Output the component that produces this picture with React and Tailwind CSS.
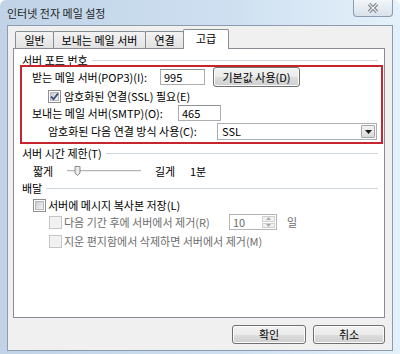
import React from "react";

const FONT = "font-['Noto_Sans_CJK_KR','Noto_Sans',sans-serif]";

function CheckBox({ checked, disabled }) {
  return (
    <span
      className={`w-[13px] h-[13px] shrink-0 border flex items-center justify-center ${
        disabled ? "border-[#c5c5c5] bg-[#f4f4f4]" : "border-[#8e8f8f] bg-white"
      }`}
    >
      <span
        className={`w-[9px] h-[9px] relative ${
          disabled
            ? "bg-[#f0f0f0]"
            : "bg-gradient-to-br from-[#c9cdd3] to-[#f4f4f4] border border-[#b4b8bd]"
        }`}
      >
        {checked && (
          <svg
            viewBox="0 0 11 11"
            className="absolute -left-[2px] -top-[2px] w-[11px] h-[11px]"
          >
            <path
              d="M2 5.5 L4.5 8.2 L9 2.5"
              fill="none"
              stroke="#364a7c"
              strokeWidth="1.8"
            />
          </svg>
        )}
      </span>
    </span>
  );
}

function GroupHeader({ label }) {
  return (
    <div className="flex items-center h-[12px] gap-[4px]">
      <span className="text-[11px] leading-none text-black whitespace-nowrap">
        {label}
      </span>
      <span className="flex-1 border-t border-[#cfd6dc]" />
    </div>
  );
}

function WinButton({ children, className }) {
  return (
    <div
      className={`flex items-center justify-center border border-[#707070] rounded-[3px] bg-[linear-gradient(#f2f2f2_0%,#ebebeb_50%,#dddddd_51%,#cfcfcf_100%)] shadow-[inset_0_0_0_1px_#fbfbfb] text-[11px] leading-none text-black ${className}`}
    >
      {children}
    </div>
  );
}

function TextBox({ value, className, disabled }) {
  return (
    <div
      className={`flex items-center px-[3px] bg-white border ${
        disabled
          ? "border-[#b8b8b8] text-[#8a8a8a]"
          : "border-[#abadb3] border-t-[#8e9297] text-black"
      } text-[11px] leading-none ${className}`}
    >
      {value}
    </div>
  );
}

export default function App() {
  return (
    <div
      className={`w-[400px] h-[354px] overflow-hidden flex flex-col bg-[linear-gradient(90deg,#c0d3e7_0%,#cddff0_55%,#e4f1fa_100%)] rounded-t-[6px] ${FONT}`}
    >
      {/* Title bar */}
      <div className="h-[25px] flex items-start justify-between pl-[7px] pr-[7px]">
        <span className="text-[11px] leading-none text-[#1e1e1e] mt-[8px]">
          인터넷 전자 메일 설정
        </span>
        <div className="w-[40px] h-[17px] border border-t-0 border-[#8d9cb0] rounded-b-[4px] bg-gradient-to-b from-[#f3f6fa] to-[#d8e1eb] flex items-center justify-center">
          <svg viewBox="0 0 12 10" className="w-[12px] h-[10px]">
            <path d="M2 1 L10 9 M10 1 L2 9" stroke="#6f757d" strokeWidth="3.2" />
            <path d="M2 1 L10 9 M10 1 L2 9" stroke="#eef1f4" strokeWidth="1.3" />
          </svg>
        </div>
      </div>

      {/* Client area */}
      <div className="mx-[7px] h-[326px] border border-[#8e9bab] bg-[#f0f0f0] flex flex-col pt-[3px] pl-[5px] pr-[7px]">
        {/* Tabs */}
        <div className="h-[19px] flex items-end pl-[2px] text-[11px] leading-none text-black">
          <div className="w-[39px] h-[17px] border border-b-0 border-[#898c95] rounded-t-[2px] bg-gradient-to-b from-[#f3f3f3] to-[#e2e2e2] flex items-center justify-center">
            일반
          </div>
          <div className="w-[93px] h-[17px] -ml-px border border-b-0 border-[#898c95] rounded-t-[2px] bg-gradient-to-b from-[#f3f3f3] to-[#e2e2e2] flex items-center justify-center">
            보내는 메일 서버
          </div>
          <div className="w-[39px] h-[17px] -ml-px border border-b-0 border-[#898c95] rounded-t-[2px] bg-gradient-to-b from-[#f3f3f3] to-[#e2e2e2] flex items-center justify-center">
            연결
          </div>
          <div className="w-[46px] h-[20px] -ml-[1px] -mb-px relative z-10 border border-b-0 border-[#898c95] rounded-t-[2px] bg-white flex items-center justify-center pb-[2px]">
            고급
          </div>
        </div>

        {/* Tab panel */}
        <div className="h-[270px] border border-[#898c95] bg-white flex flex-col pl-[8px] pr-[6px] pt-[5px] text-[11px] leading-none text-black">
          <GroupHeader label="서버 포트 번호" />

          <div className="-ml-[2px] -mr-[5px] -mt-px h-[79px] border-2 border-[#c8242e] flex flex-col pl-[10px]">
            <div className="h-[20px] flex items-center">
              <span className="w-[128px] whitespace-nowrap">받는 메일 서버(POP3)(I):</span>
              <TextBox value="995" className="w-[45px] h-[16px]" />
              <WinButton className="ml-[8px] w-[87px] h-[20px]">기본값 사용(D)</WinButton>
            </div>
            <div className="h-[18px] flex items-center pl-[16px] gap-[3px]">
              <CheckBox checked />
              <span className="whitespace-nowrap">암호화된 연결(SSL) 필요(E)</span>
            </div>
            <div className="h-[16px] flex items-center">
              <span className="w-[146px] whitespace-nowrap">보내는 메일 서버(SMTP)(O):</span>
              <TextBox value="465" className="w-[43px] h-[16px]" />
            </div>
            <div className="h-[21px] flex items-center pl-[16px]">
              <span className="w-[169px] whitespace-nowrap">암호화된 다음 연결 방식 사용(C):</span>
              <div className="w-[160px] h-[17px] bg-white border border-[#abadb3] flex items-center justify-between pl-[4px] pr-[1px]">
                <span>SSL</span>
                <div className="w-[14px] h-[13px] border border-[#a7a7a7] rounded-[1px] bg-gradient-to-b from-[#f4f4f4] to-[#d9d9d9] flex items-center justify-center">
                  <svg viewBox="0 0 7 4" className="w-[7px] h-[4px]">
                    <path d="M0 0 H7 L3.5 4 Z" fill="#1a1a1a" />
                  </svg>
                </div>
              </div>
            </div>
          </div>

          <div className="mt-[3px]">
            <GroupHeader label="서버 시간 제한(T)" />
          </div>
          <div className="mt-[4px] h-[16px] flex items-center pl-[11px]">
            <span className="w-[34px]">짧게</span>
            <svg viewBox="0 0 74 14" className="w-[74px] h-[14px]">
              <rect x="0" y="6" width="74" height="1" fill="#b4b4b4" />
              <rect x="0" y="7" width="74" height="1" fill="#ececec" />
              <path
                d="M8 2.5 H13 V9 L10.5 11.5 L8 9 Z"
                fill="#e9e9e9"
                stroke="#8c8c8c"
                strokeWidth="1"
              />
            </svg>
            <span className="ml-[14px] w-[35px]">길게</span>
            <span>1분</span>
          </div>

          <div className="mt-[3px]">
            <GroupHeader label="배달" />
          </div>
          <div className="mt-[3px] h-[16px] flex items-center pl-[11px] gap-[2px]">
            <CheckBox />
            <span className="whitespace-nowrap">서버에 메시지 복사본 저장(L)</span>
          </div>
          <div className="h-[18px] flex items-center pl-[27px] text-[#6d6d6d]">
            <CheckBox disabled />
            <span className="ml-[2px] w-[165px] whitespace-nowrap">
              다음 기간 후에 서버에서 제거(R)
            </span>
            <div className="w-[48px] h-[16px] bg-white border border-[#b5b5b5] flex items-center justify-between pl-[3px] pr-[1px]">
              <span className="text-[#6d6d6d]">10</span>
              <div className="w-[13px] h-[12px] flex flex-col gap-px">
                <div className="flex-1 border border-[#cfcfcf] bg-[#f1f1f1] flex items-center justify-center">
                  <svg viewBox="0 0 5 3" className="w-[5px] h-[3px]">
                    <path d="M0 3 H5 L2.5 0 Z" fill="#a8a8a8" />
                  </svg>
                </div>
                <div className="flex-1 border border-[#cfcfcf] bg-[#f1f1f1] flex items-center justify-center">
                  <svg viewBox="0 0 5 3" className="w-[5px] h-[3px]">
                    <path d="M0 0 H5 L2.5 3 Z" fill="#a8a8a8" />
                  </svg>
                </div>
              </div>
            </div>
            <span className="ml-[10px]">일</span>
          </div>
          <div className="mt-[2px] h-[16px] flex items-center pl-[27px] text-[#6d6d6d]">
            <CheckBox disabled />
            <span className="ml-[2px] whitespace-nowrap">
              지운 편지함에서 삭제하면 서버에서 제거(M)
            </span>
          </div>
        </div>

        {/* Buttons */}
        <div className="mt-[7px] h-[19px] flex justify-end gap-[7px]">
          <WinButton className="w-[74px] h-[19px]">확인</WinButton>
          <WinButton className="w-[72px] h-[19px]">취소</WinButton>
        </div>
      </div>
    </div>
  );
}
